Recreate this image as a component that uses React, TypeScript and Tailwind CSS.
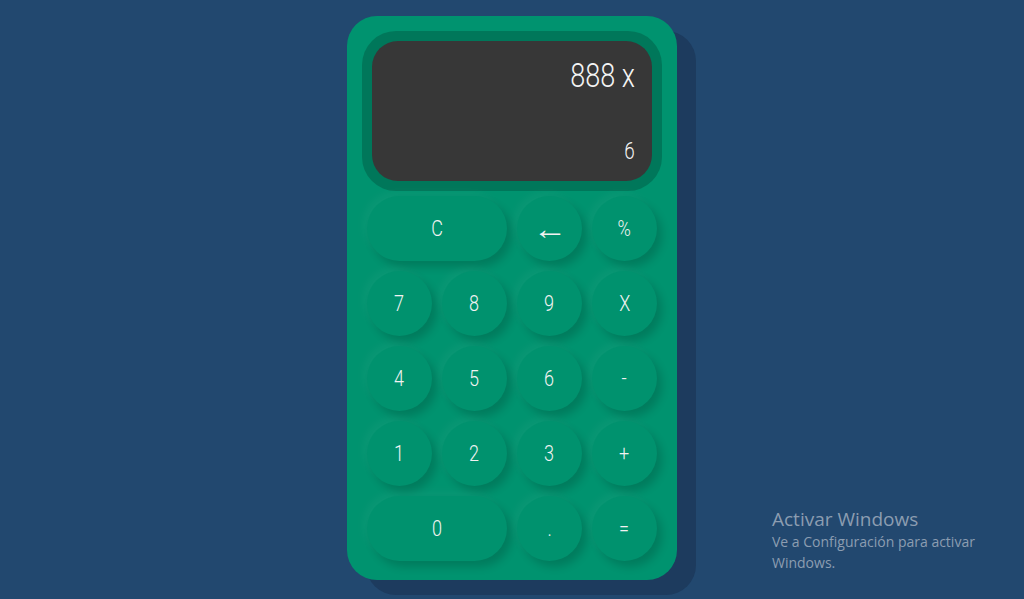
import React from 'react'

const ROWS: { label: string; wide?: boolean }[][] = [
  [{ label: 'C', wide: true }, { label: '←' }, { label: '%' }],
  [{ label: '7' }, { label: '8' }, { label: '9' }, { label: 'X' }],
  [{ label: '4' }, { label: '5' }, { label: '6' }, { label: '-' }],
  [{ label: '1' }, { label: '2' }, { label: '3' }, { label: '+' }],
  [{ label: '0', wide: true }, { label: '.' }, { label: '=' }],
]

function Key({ label, wide }: { label: string; wide?: boolean }) {
  const isArrow = label === '←'
  return (
    <button
      type="button"
      className={`flex h-[65px] items-center justify-center rounded-full bg-[#00926e] font-light text-[#f2f2f2] shadow-[5px_6px_9px_rgba(0,0,0,0.16),-4px_-4px_8px_rgba(255,255,255,0.04)] ${
        wide ? 'w-[140px]' : 'w-[65px]'
      } ${isArrow ? 'text-[30px]' : 'text-[22px]'}`}
    >
      <span className={`inline-block ${isArrow ? 'scale-x-[1.15]' : 'scale-x-[0.82]'}`}>{label}</span>
    </button>
  )
}

export default function App() {
  return (
    <div
      className="relative flex h-[599px] w-full justify-center overflow-hidden bg-[#22486f]"
      style={{ fontFamily: 'Roboto, "Liberation Sans", sans-serif' }}
    >
      <div className="mt-[16px] flex h-[564px] w-[330px] flex-col rounded-[30px] bg-[#00936f] px-[15px] pt-[15px] shadow-[19px_15px_0_#1d3b5e]">
        <div className="rounded-[34px] bg-[#00775a] p-[10px]">
          <div className="flex h-[140px] flex-col items-end rounded-[26px] bg-[#373737] pr-[17px] text-[#f4f4f4]">
            <span className="mt-[15px] inline-block origin-right scale-x-[0.82] text-[33px] font-light leading-[40px]">
              888 x
            </span>
            <span className="mt-[42px] inline-block origin-right scale-x-[0.82] text-[23px] font-light leading-[28px]">
              6
            </span>
          </div>
        </div>
        <div className="mt-[5px] flex flex-col gap-[10px] px-[5px]">
          {ROWS.map((row, i) => (
            <div key={i} className="flex gap-[10px]">
              {row.map((k) => (
                <Key key={k.label} label={k.label} wide={k.wide} />
              ))}
            </div>
          ))}
        </div>
      </div>

      <div
        className="absolute left-[772px] top-[507px] text-[#8c9db1]"
        style={{ fontFamily: '"Open Sans", "Noto Sans", sans-serif' }}
      >
        <div className="text-[19px] leading-[24px]">Activar Windows</div>
        <div className="w-[230px] text-[14px] leading-[21px]">
          Ve a Configuración para activar Windows.
        </div>
      </div>
    </div>
  )
}
